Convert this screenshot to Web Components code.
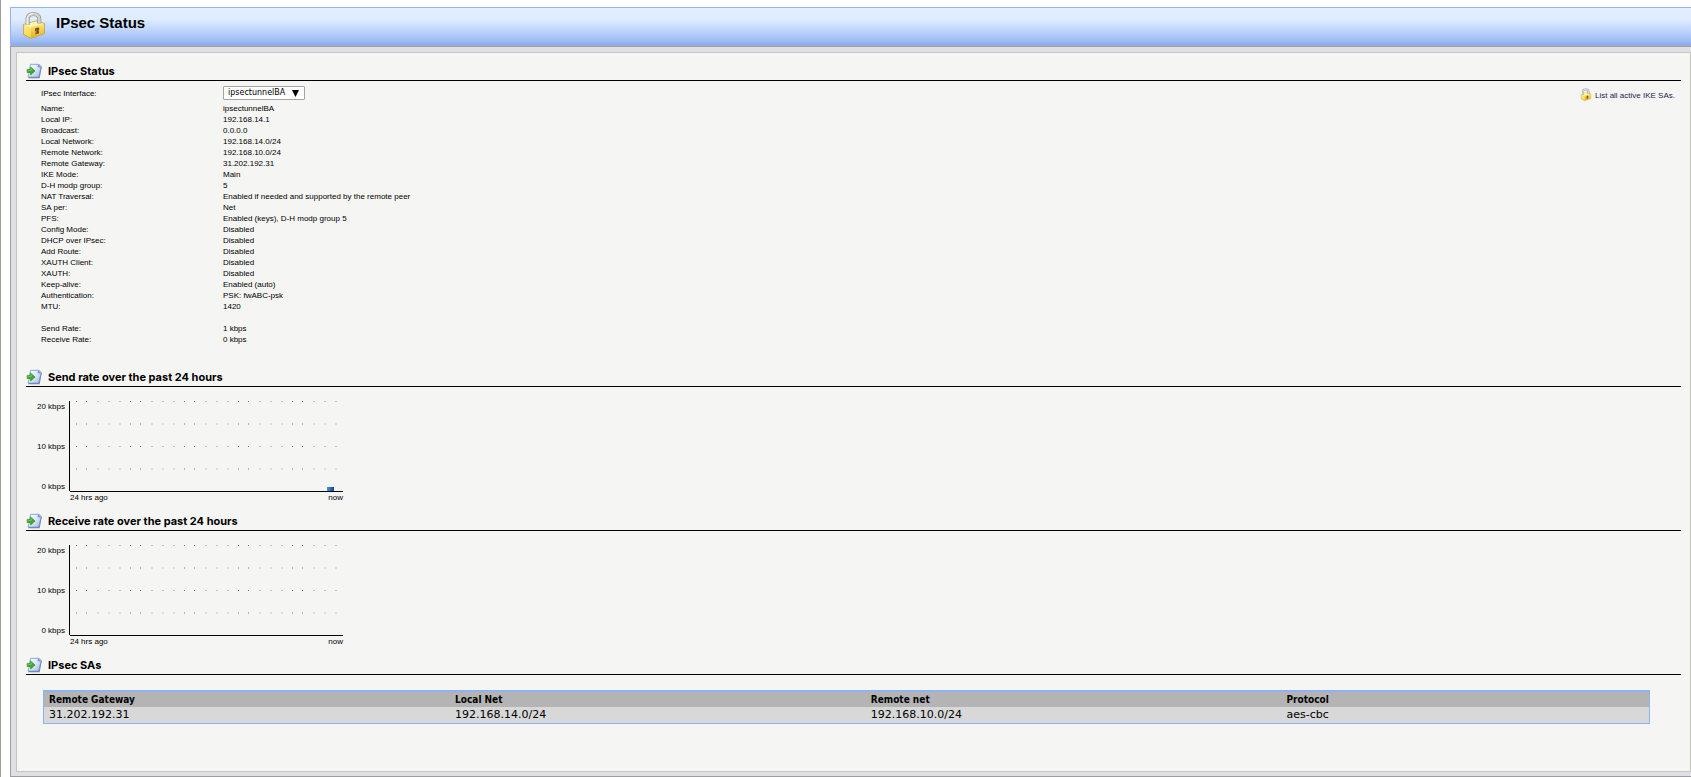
<!DOCTYPE html>
<html lang="en">
<head>
<meta charset="utf-8">
<title>IPsec Status</title>
<style>
  body {
    margin: 0;
    background: #fff;
    color: #000;
    font: 8px/11px "Liberation Sans", Arial, sans-serif;
  }
</style>
</head>
<body>

<status-page>
  <page-banner slot="banner">IPsec Status</page-banner>

  <page-section heading="IPsec Status">
    <tunnel-info></tunnel-info>
  </page-section>

  <page-section heading="Send rate over the past 24 hours">
    <rate-chart max="20" samples="22:1"></rate-chart>
  </page-section>

  <page-section heading="Receive rate over the past 24 hours">
    <rate-chart max="20"></rate-chart>
  </page-section>

  <page-section heading="IPsec SAs">
    <sa-table></sa-table>
  </page-section>
</status-page>

<template id="status-page">
  <style>
  :host {
    display: flex;
    flex-direction: column;
    box-sizing: border-box;
    min-height: 100vh;
    padding: 7px 0 0 9px;
    border-left: 1px solid #9c9ca0;
  }
  .frame {
    flex: 1;
    display: flex;
    padding: 5px 0 4px 5px;
    background: #e0dfe3;
    border-left: 1px solid #9d9da1;
    border-bottom: 1px solid #9d9da1;
  }
  main {
    flex: 1;
    padding: 9px;
    background: #f5f5f3;
    border: 1px solid #c5c5bd;
  }
  </style>
  <slot name="banner"></slot>
  <div class="frame">
    <main><slot></slot></main>
  </div>
</template>

<template id="page-banner">
  <style>
  :host {
    display: block;
    border: 1px solid #94b4f4;
    border-right: none;
    border-bottom-color: #9d9da1;
    background: linear-gradient(#e4efff, #dfecff 30%, #b9d0fa 65%, #94b6f4 92%, #92aee2 92%);
  }
  header {
    display: flex;
    align-items: center;
    gap: 11px;
    padding: 3px 12px 5px;
  }
  lock-icon {
    width: 22px;
    height: 30px;
  }
  h1 {
    margin: 0;
    padding-bottom: 6px;
    font: bold 15px/20px "Liberation Sans", Arial, sans-serif;
  }
  </style>
  <header>
    <lock-icon></lock-icon>
    <h1><slot></slot></h1>
  </header>
</template>

<template id="lock-icon">
  <style>
  :host { display: block; flex: none; }
  svg { display: block; width: 100%; height: 100%; }
  </style>
  <svg viewBox="0 0 22 30" aria-hidden="true">
    <defs>
      <linearGradient id="front" x1="0" y1="0" x2="1" y2="1">
        <stop offset="0" stop-color="#fff2a0"/>
        <stop offset=".5" stop-color="#f8dc58"/>
        <stop offset="1" stop-color="#ecc030"/>
      </linearGradient>
      <linearGradient id="side" x1="0" y1="0" x2="0" y2="1">
        <stop offset="0" stop-color="#fbe675"/>
        <stop offset="1" stop-color="#e2b02a"/>
      </linearGradient>
    </defs>
    <path d="M.6 13.500 13 10 21.400 12.500v10L8 27.400.6 23.500z" fill="url(#front)" stroke="#c09a28" stroke-width=".8" stroke-linejoin="round"/>
    <path d="M1 13.600 13 10.400 21 12.700 8 16.400z" fill="#fff4b0"/>
    <path d="M8 16.500 21 12.900V22.300L8 27z" fill="url(#side)"/>
    <path d="M4.600 14V8C4.600 4.500 7.300 3 10.300 3s6 1.500 6 5v4.500" fill="none" stroke="#8c8c88" stroke-width="4"/>
    <path d="M4.600 14V8C4.600 4.500 7.300 3 10.300 3s6 1.500 6 5v4.500" fill="none" stroke="#d0d0cc" stroke-width="2.800"/>
    <path d="M4.200 13V8c0-3.300 2.800-5.200 6.100-5.300" fill="none" stroke="#fafafa" stroke-width="1"/>
    <path d="M11.900 18.600c0-2 4.400-3 4.400-.8 0 1-.8 1.400-.6 2l.4 2.400-3.700 1.300.3-2.700c-.1-.6-.8-1-.8-2.200z" fill="#80500e"/>
    <path d="M13.400 18.300v3.800" stroke="#b07a24" stroke-width=".8"/>
  </svg>
</template>

<template id="page-section">
  <style>
  :host { display: block; }
  h2 {
    display: flex;
    align-items: center;
    gap: 6px;
    margin: 0;
    border-bottom: 1px solid #000;
    font: bold 11px/18px Inter, "Liberation Sans", Arial, sans-serif;
  }
  svg { flex: none; width: 16px; height: 16px; }
  </style>
  <h2>
    <svg viewBox="0 0 16 16" aria-hidden="true">
      <defs>
        <linearGradient id="page" x1="0" y1="0" x2="1" y2="1">
          <stop offset="0" stop-color="#fff"/>
          <stop offset=".5" stop-color="#dbe7fa"/>
          <stop offset="1" stop-color="#98b6e8"/>
        </linearGradient>
      </defs>
      <path d="M5 1.500h8.500l2.300 2.600-2.200 11.200H2.400z" fill="#6c7c9c"/>
      <path d="M4.500 1.300h8.300l2.200 2.300-2.300 10.500H2.200z" fill="url(#page)" stroke="#7a9bd4" stroke-width=".8"/>
      <path d="M12 1.300l-.4 3 3.400.3z" fill="#6f96d8"/>
      <path d="M1.200 6.500h3.400V4L9 8l-4.400 4V9.500H1.200z" fill="#3fae22" stroke="#238014" stroke-width=".6"/>
      <path d="M1.800 7.300h3.500V5.600" fill="none" stroke="#8be06a" stroke-width=".7"/>
    </svg>
    <span></span>
  </h2>
  <slot></slot>
</template>

<template id="tunnel-info">
  <style>
  :host {
    display: flex;
    justify-content: space-between;
    align-items: flex-start;
    padding: 5px 6px 23px 15px;
  }
  .row {
    display: grid;
    grid-template-columns: 182px auto;
    align-items: center;
  }
  .picker { margin-bottom: 3px; }
  dl, dd { margin: 0; }
  .rates { margin-top: 11px; }
  .select {
    display: grid;
    justify-self: start;
    align-items: center;
    width: 82px;
  }
  select, .select svg { grid-area: 1 / 1; }
  select {
    appearance: none;
    width: 100%;
    height: 14px;
    margin: 0;
    padding: 0 0 0 4px;
    border: 1px solid #a3a3a3;
    border-radius: 1px;
    background: #fff;
    color: #000;
    font: 8px/12px "DejaVu Sans", Verdana, sans-serif;
  }
  .select svg {
    justify-self: end;
    width: 7px;
    height: 7px;
    margin-right: 6px;
    pointer-events: none;
  }
  a {
    display: flex;
    align-items: center;
    gap: 3px;
    color: #1c1c50;
    text-decoration: none;
  }
  lock-icon { width: 12px; height: 14px; }
  .link { padding-top: 2px; }
  </style>
  <div>
    <div class="row picker">
      <label for="iface">IPsec Interface:</label>
      <span class="select">
        <select id="iface"><option>ipsectunnelBA</option></select>
        <svg viewBox="0 0 7 7" aria-hidden="true"><path d="M0 0h7L3.500 7z"/></svg>
      </span>
    </div>
    <dl class="details"></dl>
    <dl class="rates"></dl>
  </div>
  <div class="link">
    <a href="#ike"><lock-icon></lock-icon>List all active IKE SAs.</a>
  </div>
</template>

<template id="rate-chart">
  <style>
  :host {
    display: grid;
    grid-template-columns: 39px 274px;
    column-gap: 4px;
    padding: 14px 0 9px;
  }
  .scale {
    display: flex;
    flex-direction: column;
    justify-content: space-between;
    text-align: right;
  }
  svg { display: block; width: 274px; height: 91px; }
  .time {
    grid-column: 2;
    display: flex;
    justify-content: space-between;
    padding-left: 1px;
  }
  </style>
  <div class="scale"></div>
  <svg viewBox="0 0 274 91" shape-rendering="crispEdges" role="img">
    <defs>
      <linearGradient id="bar">
        <stop offset="0" stop-color="#4a94d8"/>
        <stop offset="1" stop-color="#0a4a90"/>
      </linearGradient>
    </defs>
    <g class="dots"></g>
    <g class="bars"></g>
    <path d="M0 0h1v90h-1zM1 90h273v1h-273z"/>
  </svg>
  <div class="time"><span>24 hrs ago</span><span>now</span></div>
</template>

<template id="sa-table">
  <style>
  :host {
    display: block;
    padding: 15px 31px 0 17px;
  }
  table {
    width: 100%;
    table-layout: fixed;
    border: 1px solid #8fb2f4;
    border-top-width: 2px;
    border-spacing: 0;
    font: 11px/16px "DejaVu Sans", Verdana, sans-serif;
  }
  th, td {
    padding: 0 5px;
    text-align: left;
  }
  th {
    background: #b4b4b4;
    font: bold 10px/15px "DejaVu Sans Condensed", Tahoma, sans-serif;
  }
  td { background: #d8d8d8; }
  .first { width: 25.3%; }
  .mid { width: 25.9%; }
  </style>
  <table>
    <colgroup><col class="first"><col class="mid"><col class="mid"><col></colgroup>
    <thead>
      <tr>
        <th scope="col">Remote Gateway</th>
        <th scope="col">Local Net</th>
        <th scope="col">Remote net</th>
        <th scope="col">Protocol</th>
      </tr>
    </thead>
    <tbody>
      <tr>
        <td>31.202.192.31</td>
        <td>192.168.14.0/24</td>
        <td>192.168.10.0/24</td>
        <td>aes-cbc</td>
      </tr>
    </tbody>
  </table>
</template>

<script>
class BaseElement extends HTMLElement {
  constructor() {
    super();

    const template = document.getElementById(this.localName);
    this.attachShadow({ mode: 'open' });
    this.shadowRoot.appendChild(template.content.cloneNode(true));
  }
}

class StatusPage extends BaseElement {}
class PageBanner extends BaseElement {}
class LockIcon extends BaseElement {}
class SaTable extends BaseElement {}

class PageSection extends BaseElement {
  static get observedAttributes() {
    return ['heading']
  }

  attributeChangedCallback(name, oldValue, newValue) {
    this.shadowRoot.querySelector('h2 span').textContent = newValue;
  }
}

const details = [
  ['Name', 'ipsectunnelBA'],
  ['Local IP', '192.168.14.1'],
  ['Broadcast', '0.0.0.0'],
  ['Local Network', '192.168.14.0/24'],
  ['Remote Network', '192.168.10.0/24'],
  ['Remote Gateway', '31.202.192.31'],
  ['IKE Mode', 'Main'],
  ['D-H modp group', '5'],
  ['NAT Traversal', 'Enabled if needed and supported by the remote peer'],
  ['SA per', 'Net'],
  ['PFS', 'Enabled (keys), D-H modp group 5'],
  ['Config Mode', 'Disabled'],
  ['DHCP over IPsec', 'Disabled'],
  ['Add Route', 'Disabled'],
  ['XAUTH Client', 'Disabled'],
  ['XAUTH', 'Disabled'],
  ['Keep-alive', 'Enabled (auto)'],
  ['Authentication', 'PSK: fwABC-psk'],
  ['MTU', '1420'],
];

const rates = [
  ['Send Rate', '1 kbps'],
  ['Receive Rate', '0 kbps'],
];

class TunnelInfo extends BaseElement {
  connectedCallback() {
    this.fill('.details', details);
    this.fill('.rates', rates);
  }

  fill(selector, rows) {
    this.shadowRoot.querySelector(selector).innerHTML = rows
      .map(([label, value]) => `<div class="row"><dt>${label}:</dt><dd>${value}</dd></div>`)
      .join('');
  }
}

class RateChart extends BaseElement {
  connectedCallback() {
    const max = Number(this.getAttribute('max'));
    const root = this.shadowRoot;

    root.querySelector('.scale').innerHTML = [max, max / 2, 0]
      .map(value => `<span>${value} kbps</span>`)
      .join('');

    // one column per hour, a fainter row of dots between the labelled ones
    let dots = '';
    for (let row = 0; row < 4; row++) {
      for (let hour = 0; hour < 25; hour++) {
        const sharp = hour % 5 < 2;
        const half = row % 2 === 1;
        const fill = sharp ? (half ? '#b4b4b4' : '#707070') : (half ? '#dededc' : '#c2c2c2');
        const x = Math.round(6.600 + hour * 10.800);
        const y = [0, 22, 45, 67][row];
        dots += `<rect x="${x}" y="${y}" width="${sharp ? 1 : 2}" height="${half ? 2 : 1}" fill="${fill}"/>`;
      }
    }
    root.querySelector('.dots').innerHTML = dots;

    const samples = this.getAttribute('samples');
    if (!samples) return;
    root.querySelector('.bars').innerHTML = samples.split(',').map(sample => {
      const [hour, rate] = sample.split(':').map(Number);
      const height = Math.round(rate / max * 80);
      return `<rect x="${Math.round(20 + hour * 10.800)}" y="${90 - height}" width="7" height="${height}" fill="url(#bar)"/>`;
    }).join('');
  }
}

customElements.define('lock-icon', LockIcon);
customElements.define('status-page', StatusPage);
customElements.define('page-banner', PageBanner);
customElements.define('page-section', PageSection);
customElements.define('tunnel-info', TunnelInfo);
customElements.define('rate-chart', RateChart);
customElements.define('sa-table', SaTable);
</script>
</body>
</html>
